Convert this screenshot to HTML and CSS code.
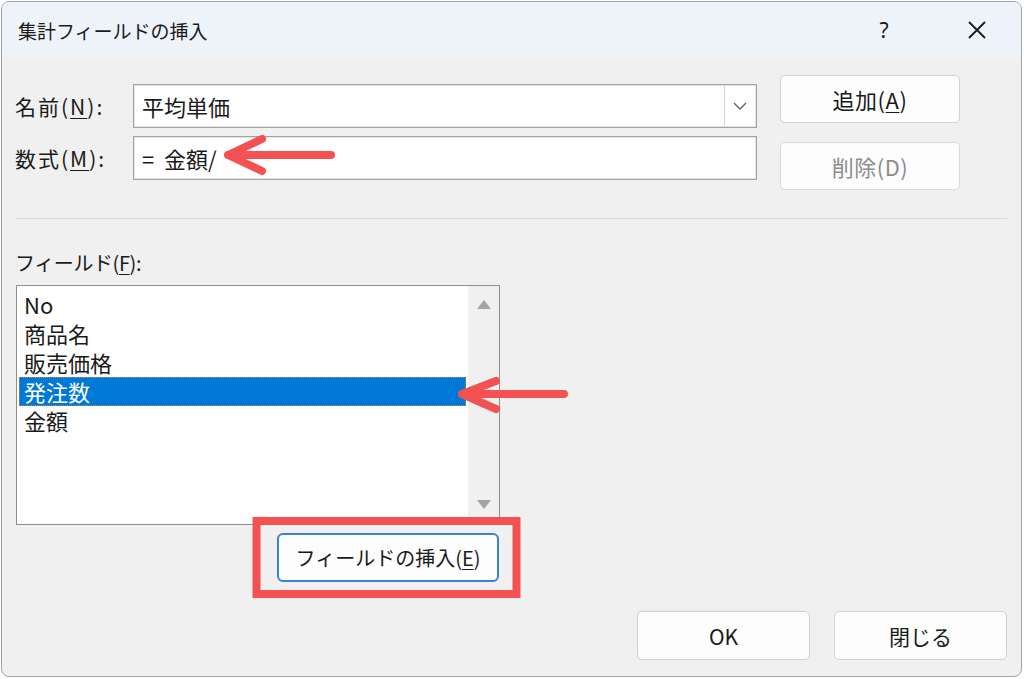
FILE: index.html
```html
<!DOCTYPE html>
<html>
<head>
    <title>集計フィールドの挿入</title>
    <link rel="stylesheet" href="styles.css">
</head>
<body>
    <div class="window">
        <div class="titlebar">
            <span class="title">集計フィールドの挿入</span>
            <span class="help">?</span>
            <span class="close">
                <svg width="18" height="18" viewBox="0 0 18 18"><path d="M1 1 L17 17 M17 1 L1 17" stroke="#1a1a1a" stroke-width="1.8" fill="none"/></svg>
            </span>
        </div>

        <div class="body">
            <div class="top">
                <div class="fields">
                    <label class="lbl">名前(<u>N</u>):</label>
                    <div class="combo">
                        <span class="combo-text">平均単価</span>
                        <span class="combo-btn">
                            <svg width="14" height="8" viewBox="0 0 14 8"><path d="M1 1 L7 7 L13 1" stroke="#606060" stroke-width="1.4" fill="none"/></svg>
                        </span>
                    </div>
                    <label class="lbl">数式(<u>M</u>):</label>
                    <div class="textbox">=&nbsp;&nbsp;金額/</div>
                </div>
                <div class="side-buttons">
                    <button class="btn default">追加(<u>A</u>)</button>
                    <button class="btn disabled">削除(D)</button>
                </div>
            </div>

            <div class="separator"></div>

            <div class="list-label">フィールド(<u>F</u>):</div>
            <div class="listbox">
                <div class="items">
                    <div class="item">No</div>
                    <div class="item">商品名</div>
                    <div class="item">販売価格</div>
                    <div class="item selected">発注数</div>
                    <div class="item">金額</div>
                </div>
                <div class="scrollbar">
                    <span class="arrow-up"></span>
                    <span class="arrow-down"></span>
                </div>
            </div>

            <button class="btn insert">フィールドの挿入(<u>E</u>)</button>

            <div class="footer">
                <button class="btn ok">OK</button>
                <button class="btn">閉じる</button>
            </div>
        </div>
    </div>

    <!-- annotations drawn over the dialog -->
    <svg class="marks" viewBox="0 0 1024 679" width="1024" height="679">
        <g stroke="#f45252" stroke-width="8" stroke-linecap="round" stroke-linejoin="round" fill="none">
            <path d="M331 155 L228 155 M262 139 L228 155 L262 171"/>
            <path d="M564 394 L462 394 M496 381 L462 394 L496 409"/>
            <rect x="256.5" y="521" width="260" height="73" stroke-linecap="butt" stroke-linejoin="miter"/>
        </g>
    </svg>
</body>
</html>
```

FILE: styles.css
```css
body {
    margin: 0;
    width: 1024px;
    height: 679px;
    overflow: hidden;
    background: #ffffff;
    font-family: "Noto Sans CJK JP", "Noto Sans", sans-serif;
    color: #1a1a1a;
    position: relative;
}

.window {
    margin: 1px 2px 2px 1px;
    height: 674px;
    border: 1px solid #a4a4a4;
    border-radius: 8px;
    background: #f0f0f0;
    overflow: hidden;
}

.titlebar {
    height: 56px;
    background: #eef3f9;
    display: flex;
    align-items: center;
    padding-left: 16px;
}

.title {
    font-size: 19px;
    flex: 1;
}

.help {
    font-family: "Noto Sans", sans-serif;
    font-size: 21px;
    width: 20px;
    text-align: center;
    margin-right: 74px;
}

.close {
    display: flex;
    margin-right: 35px;
}

.body {
    padding: 0 14px 0 13px;
}

.top {
    display: flex;
    padding-top: 17px;
}

.fields {
    margin-top: 9px;
    display: grid;
    grid-template-columns: 118px 624px;
    grid-auto-rows: 44px;
    row-gap: 8px;
    align-items: center;
}

.lbl {
    font-size: 21px;
    letter-spacing: 2px;
}

u {
    text-decoration-thickness: 1px;
    text-underline-offset: 3px;
}

.combo,
.textbox {
    height: 44px;
    box-sizing: border-box;
    background: #ffffff;
    border: 1px solid #a2a2a2;
    box-shadow: inset 0 0 0 1px #e4e4e4;
    font-size: 22px;
    display: flex;
    align-items: center;
}

.combo-text {
    flex: 1;
    padding-left: 8px;
}

.textbox {
    padding-left: 8px;
}

.combo-btn {
    width: 30px;
    align-self: stretch;
    margin: 1px;
    border-left: 1px solid #d4d4d4;
    display: flex;
    align-items: center;
    justify-content: center;
}

.side-buttons {
    margin-left: 23px;
    display: flex;
    flex-direction: column;
    gap: 19px;
}

.btn {
    font-family: "Noto Sans CJK JP", "Noto Sans", sans-serif;
    font-size: 21px;
    color: #1a1a1a;
    background: #fdfdfd;
    border: 1px solid #d2d2d2;
    border-radius: 5px;
    padding: 0;
    box-sizing: border-box;
}

.side-buttons .btn {
    width: 180px;
    height: 48px;
    font-size: 22px;
    letter-spacing: 0.5px;
}

.btn.default {
    border-color: #c7d3df;
}

.btn.disabled {
    color: #8c8c8c;
    border-color: #dadada;
}

.separator {
    margin-top: 28px;
    border-top: 1px solid #dadada;
}

.list-label {
    margin-top: 30px;
    font-size: 20px;
    line-height: 28px;
    letter-spacing: -0.4px;
}

.listbox {
    margin: 8px 0 0 1px;
    width: 484px;
    height: 240px;
    box-sizing: border-box;
    border: 1px solid #8e8e8e;
    background: #ffffff;
    display: flex;
}

.items {
    flex: 1;
    padding: 4px 0 0 2px;
}

.item {
    font-size: 22px;
    line-height: 29px;
    height: 29px;
    padding-left: 5px;
    width: 447px;
    box-sizing: border-box;
}

.item.selected {
    background: #0078d7;
    color: #ffffff;
    outline: 1px dotted #c88a4a;
    outline-offset: -1px;
}

.scrollbar {
    width: 31px;
    background: #f0f0f0;
    display: flex;
    flex-direction: column;
    align-items: center;
    justify-content: space-between;
    padding: 14px 0 15px;
}

.arrow-up,
.arrow-down {
    width: 0;
    height: 0;
    border-left: 7px solid transparent;
    border-right: 7px solid transparent;
}

.arrow-up {
    border-bottom: 9px solid #a3a3a3;
}

.arrow-down {
    border-top: 9px solid #a3a3a3;
}

.btn.insert {
    display: block;
    margin: 8px 0 0 262px;
    width: 222px;
    height: 49px;
    font-size: 20px;
    border: 2px solid #3b82cf;
    border-radius: 6px;
}

.footer {
    margin-top: 29px;
    display: flex;
    justify-content: flex-end;
    gap: 24px;
}

.footer .btn {
    width: 173px;
    height: 49px;
}

.btn.ok {
    border-color: #c5d2de;
}

.marks {
    position: absolute;
    left: 0;
    top: 0;
    pointer-events: none;
}
```
